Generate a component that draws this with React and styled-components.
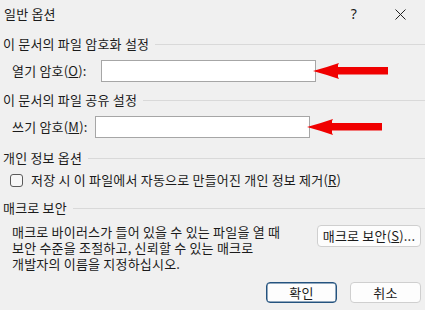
import React from "react";
import styled, { createGlobalStyle } from "styled-components";

const GlobalStyle = createGlobalStyle`
  html, body {
    margin: 0;
    padding: 0;
    background: #f0f0f0;
  }
  body {
    font-family: "Noto Sans CJK KR", "Noto Sans", sans-serif;
    font-size: 13px;
    letter-spacing: 0.2px;
    color: #1b1b1b;
  }
`;

const RedArrow = () => (
  <ArrowSvg width="75" height="16" viewBox="0 0 75 16">
    <path
      d="M0 8 Q13 4.5 26 0 Q24.5 2 25 4 L75 4 L75 11.5 L25 11.5 Q24.5 14 26 16 Q13 11.5 0 8 Z"
      fill="#f00000"
    />
  </ArrowSvg>
);

const CloseIcon = () => (
  <svg width="11" height="11" viewBox="0 0 11 11">
    <path d="M0.5 0.5 L10.5 10.5 M10.5 0.5 L0.5 10.5" stroke="#222" strokeWidth="1" fill="none" />
  </svg>
);

const App = () => {
  return (
    <>
      <GlobalStyle />
      <Dialog>
        <TitleBar>
          <Title>일반 옵션</Title>
          <TitleButtons>
            <HelpMark>?</HelpMark>
            <CloseBox>
              <CloseIcon />
            </CloseBox>
          </TitleButtons>
        </TitleBar>

        <GroupHeader $mt={8}>
          <span>이 문서의 파일 암호화 설정</span>
          <Rule />
        </GroupHeader>
        <FieldRow $mt={8}>
          <Label $w={89}>
            열기 암호(<u>O</u>):
          </Label>
          <TextBox />
          <RedArrow />
        </FieldRow>

        <GroupHeader $mt={10}>
          <span>이 문서의 파일 공유 설정</span>
          <Rule />
        </GroupHeader>
        <FieldRow $mt={8}>
          <Label $w={83}>
            쓰기 암호(<u>M</u>):
          </Label>
          <TextBox />
          <RedArrow />
        </FieldRow>

        <GroupHeader $mt={12}>
          <span>개인 정보 옵션</span>
          <Rule />
        </GroupHeader>
        <CheckRow>
          <CheckBox />
          <span>
            저장 시 이 파일에서 자동으로 만들어진 개인 정보 제거(<u>R</u>)
          </span>
        </CheckRow>

        <GroupHeader $mt={12}>
          <span>매크로 보안</span>
          <Rule />
        </GroupHeader>
        <MacroRow>
          <MacroText>
            <MacroLine>매크로 바이러스가 들어 있을 수 있는 파일을 열 때</MacroLine>
            <MacroLine>보안 수준을 조절하고, 신뢰할 수 있는 매크로</MacroLine>
            <MacroLine>개발자의 이름을 지정하십시오.</MacroLine>
          </MacroText>
          <Button $w={104} $h={22}>
            매크로 보안(<u>S</u>)...
          </Button>
        </MacroRow>

        <Footer>
          <Button $w={71} $h={21} $primary>
            확인
          </Button>
          <Button $w={71} $h={21}>
            취소
          </Button>
        </Footer>
      </Dialog>
    </>
  );
};

const Dialog = styled.div`
  width: 425px;
  height: 310px;
  background: #f0f0f0;
  display: flex;
  flex-direction: column;
  overflow: hidden;
`;

const TitleBar = styled.div`
  height: 28px;
  display: flex;
  align-items: center;
  justify-content: space-between;
  padding-left: 4px;
`;

const Title = styled.div`
  line-height: 16px;
`;

const TitleButtons = styled.div`
  display: flex;
  align-items: center;
  height: 100%;
`;

const HelpMark = styled.div`
  width: 46px;
  text-align: center;
  font-size: 14px;
  line-height: 16px;
  font-family: "Noto Sans", sans-serif;
`;

const CloseBox = styled.div`
  width: 46px;
  height: 100%;
  display: flex;
  align-items: center;
  justify-content: center;
  padding-right: 2px;
`;

const GroupHeader = styled.div`
  margin-top: ${(p) => p.$mt}px;
  height: 16px;
  display: flex;
  align-items: center;
  padding-left: 3px;
  line-height: 16px;
  white-space: nowrap;
`;

const Rule = styled.div`
  flex: 1;
  height: 1px;
  background: #d9d9d9;
  margin-left: 6px;
`;

const FieldRow = styled.div`
  margin-top: ${(p) => p.$mt}px;
  height: 22px;
  display: flex;
  align-items: center;
  padding-left: 12px;
`;

const Label = styled.div`
  width: ${(p) => p.$w}px;
  white-space: nowrap;
  line-height: 16px;
`;

const TextBox = styled.div`
  width: 215px;
  height: 22px;
  box-sizing: border-box;
  background: #ffffff;
  border: 1px solid #a6a6a6;
`;

const ArrowSvg = styled.svg`
  margin-left: -3px;
  flex-shrink: 0;
`;

const CheckRow = styled.div`
  margin-top: 6px;
  height: 16px;
  display: flex;
  align-items: center;
  padding-left: 10px;
  line-height: 16px;
  white-space: nowrap;
`;

const CheckBox = styled.div`
  width: 13px;
  height: 13px;
  box-sizing: border-box;
  border: 1px solid #5a5a5a;
  border-radius: 3px;
  background: #f7f7f7;
  margin-right: 8px;
`;

const MacroRow = styled.div`
  margin-top: 8px;
  display: flex;
  justify-content: space-between;
  align-items: flex-start;
  padding-left: 12px;
  padding-right: 4px;
`;

const MacroText = styled.div`
  display: flex;
  flex-direction: column;
`;

const MacroLine = styled.div`
  height: 16px;
  line-height: 16px;
  white-space: nowrap;
`;

const Button = styled.div`
  width: ${(p) => p.$w}px;
  height: ${(p) => p.$h}px;
  box-sizing: border-box;
  margin-top: 1px;
  display: flex;
  align-items: center;
  justify-content: center;
  background: #fdfdfd;
  border: 1px solid ${(p) => (p.$primary ? "#24537f" : "#cfcfcf")};
  box-shadow: ${(p) => (p.$primary ? "inset 0 0 0 0.5px #24537f" : "none")};
  border-radius: 4px;
  white-space: nowrap;
  line-height: 16px;
`;

const Footer = styled.div`
  margin-top: 9px;
  display: flex;
  justify-content: flex-end;
  gap: 13px;
  padding-right: 4px;
`;

export default App;
